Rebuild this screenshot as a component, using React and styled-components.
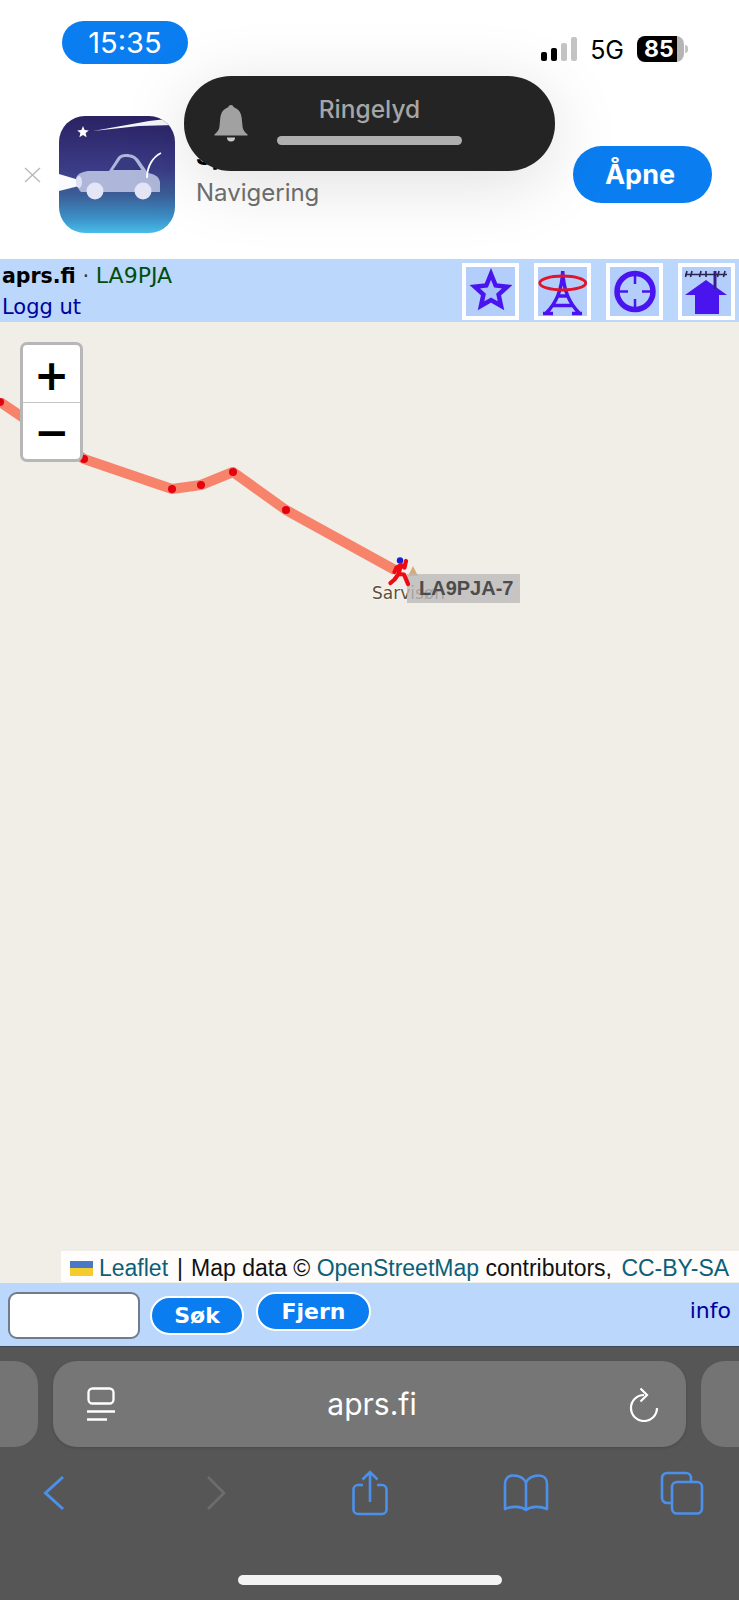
import React from "react";
import styled, { createGlobalStyle } from "styled-components";

const GlobalStyle = createGlobalStyle`
  html, body {
    margin: 0;
    padding: 0;
    background: #fff;
  }
  * {
    box-sizing: border-box;
  }
`;

const BLUE = "#0a7df0";
const TILE_INK = "#4a14ee";
const TOOL_BLUE = "#4b90ea";

const routePoints = [
  [0, 80],
  [84, 137],
  [172, 167],
  [201, 163],
  [233, 150],
  [286, 188],
  [395, 248],
];
const routeDots = routePoints.slice(0, 6);

const signalBars = [
  { height: 9, on: true },
  { height: 13, on: true },
  { height: 18, on: false },
  { height: 24, on: false },
];

export default function App() {
  return (
    <>
      <GlobalStyle />
      <Page>
        <TopArea>
          <StatusBar>
            <TimePill>15:35</TimePill>
            <StatusRight>
              <Signal>
                {signalBars.map((bar, index) => (
                  <SignalBar key={index} $height={bar.height} $on={bar.on} />
                ))}
              </Signal>
              <NetworkLabel>5G</NetworkLabel>
              <Battery>85</Battery>
            </StatusRight>
          </StatusBar>

          <Banner>
            <CloseMark viewBox="0 0 17 16">
              <path d="M1 1l15 14M16 1L1 15" stroke="#b9b9b9" strokeWidth="1.4" fill="none" />
            </CloseMark>
            <AppIcon>
              <AppArtwork />
            </AppIcon>
            <BannerText>
              <AppTitle>Sp</AppTitle>
              <AppCategory>Navigering</AppCategory>
            </BannerText>
            <OpenButton>Åpne</OpenButton>
          </Banner>

          <RingerHud>
            <BellIcon viewBox="0 0 34 39">
              <path
                d="M17 1c-1.600 0-2.600 1-2.700 2.300C9.300 5 6.800 9 6.300 14L5.500 22C5 27 2.500 28.500.5 30.300V31.500h33v-1.200C31.500 28.500 29 27 28.500 22L27.700 14C27.200 9 24.700 5 19.700 3.300 19.600 2 18.600 1 17 1z"
                fill="#a1a1a1"
              />
              <path d="M13 33.500h8a4 4 0 0 1-8 0z" fill="#c9c9c9" />
            </BellIcon>
            <HudBody>
              <HudLabel>Ringelyd</HudLabel>
              <HudBar />
            </HudBody>
          </RingerHud>
        </TopArea>

        <SiteHeader>
          <SiteInfo>
            <SiteLine>
              <SiteName>aprs.fi</SiteName>
              <SiteDot> · </SiteDot>
              <SiteUser>LA9PJA</SiteUser>
            </SiteLine>
            <LogoutLink>Logg ut</LogoutLink>
          </SiteInfo>
          <TileRow>
            <Tile>
              <TileIcon viewBox="0 0 49 49">
                <path
                  d="M25 7l4.700 11.500 11.500 1.250-8.600 7.750L35 38.750 25 33l-10 5.750 2.400-11.250-8.600-7.750 11.500-1.250z"
                  fill="#a9c1fb"
                  stroke={TILE_INK}
                  strokeWidth="4.500"
                />
              </TileIcon>
            </Tile>
            <Tile>
              <TileIcon viewBox="0 0 49 49">
                <path
                  d="M24.700 4c-.5 16-6 32-17 42.500M24.700 4c.5 16 6 32 17 42.500M5 46.500h10M34 46.500h10M18.500 29h12.500M14 38.500h21"
                  fill="none"
                  stroke={TILE_INK}
                  strokeWidth="3.500"
                />
                <ellipse cx="24.700" cy="16" rx="23" ry="7" fill="none" stroke="#e0142a" strokeWidth="2.800" />
              </TileIcon>
            </Tile>
            <Tile>
              <TileIcon viewBox="0 0 49 49">
                <circle cx="25" cy="24.500" r="18" fill="none" stroke={TILE_INK} strokeWidth="5.500" />
                <path d="M25 8v9M25 32v9M9 24.500h9M32 24.500h9" stroke={TILE_INK} strokeWidth="2.500" />
              </TileIcon>
            </Tile>
            <Tile>
              <TileIcon viewBox="0 0 49 49">
                <path d="M3 28L24 13l21 15h-8v19H13V28z" fill={TILE_INK} />
                <path d="M33 4v18" stroke="#3a1a9a" strokeWidth="3" />
                <path
                  d="M3 7.500h42M5 4l-1.500 6M10 4L8.500 10M19 4l-1.500 6M24 4v6M37 4l-1.500 6M43 4l-1.500 6"
                  stroke="#2b2350"
                  strokeWidth="1.600"
                  fill="none"
                />
              </TileIcon>
            </Tile>
          </TileRow>
        </SiteHeader>

        <MapArea>
          <RouteLayer viewBox="0 0 739 961">
            <polyline
              points={routePoints.map((p) => p.join(",")).join(" ")}
              fill="none"
              stroke="#f6836a"
              strokeWidth="10"
              strokeLinejoin="round"
            />
            {routeDots.map(([x, y]) => (
              <circle key={x} cx={x} cy={y} r="4" fill="#e3000f" />
            ))}
            <path d="M413 244l5 10h-10z" fill="#d8aa78" />
          </RouteLayer>
          <PlaceLabel>Sarvisøn</PlaceLabel>
          <TrackLabel>LA9PJA-7</TrackLabel>
          <Runner viewBox="0 0 24 30">
            <circle cx="12" cy="3.500" r="3.200" fill="#1420d8" />
            <path
              d="M13 8L10.500 17M13 8l3.500 2.500L18 4M13 8L8.500 10.500 6.500 15M10.500 17L6.500 22.500 2.500 26M10.500 17l5.500.5 4 9.500"
              fill="none"
              stroke="#ee0a12"
              strokeWidth="4.200"
              strokeLinecap="round"
              strokeLinejoin="round"
            />
          </Runner>

          <ZoomControl>
            <ZoomButton>+</ZoomButton>
            <ZoomButton $last>−</ZoomButton>
          </ZoomControl>

          <Attribution>
            <FlagIcon />
            <AttrLink>Leaflet</AttrLink>
            <AttrSeparator>|</AttrSeparator>
            Map data © <AttrLink>OpenStreetMap</AttrLink> contributors, <LicenceLink>CC-BY-SA</LicenceLink>
          </Attribution>
        </MapArea>

        <SearchBar>
          <SearchInput />
          <PillButton $width={94} $offset={4}>Søk</PillButton>
          <PillButton $width={115} $offset={0}>Fjern</PillButton>
          <InfoLink>info</InfoLink>
        </SearchBar>

        <BrowserChrome>
          <AddressRow>
            <PeekPill $side="left" />
            <AddressPill>
              <svg width="28" height="34" viewBox="0 0 28 34">
                <rect x="1.500" y="1.500" width="25" height="15" rx="4" fill="none" stroke="#fff" strokeWidth="2.300" />
                <path d="M0 24.500h28M0 32.500h20" stroke="#fff" strokeWidth="2.500" />
              </svg>
              <AddressText>aprs.fi</AddressText>
              <svg width="30" height="35" viewBox="0 0 30 35">
                <path
                  d="M15 8A13 13 0 1 0 28 21M11.500 1.500L18 8l-6.500 6.500"
                  fill="none"
                  stroke="#fff"
                  strokeWidth="2.200"
                />
              </svg>
            </AddressPill>
            <PeekPill $side="right" />
          </AddressRow>

          <NavRow>
            <svg width="22" height="36" viewBox="0 0 22 36">
              <path d="M20 2L2.500 18 20 34" fill="none" stroke={TOOL_BLUE} strokeWidth="3" />
            </svg>
            <svg width="20" height="36" viewBox="0 0 20 36">
              <path d="M2 2l16 16L2 34" fill="none" stroke="#6d6d6d" strokeWidth="2.600" />
            </svg>
            <svg width="36" height="46" viewBox="0 0 36 46">
              <path
                d="M11 15H6a4.500 4.500 0 0 0-4.500 4.500v20A4.500 4.500 0 0 0 6 44h24a4.500 4.500 0 0 0 4.500-4.500v-20A4.500 4.500 0 0 0 30 15h-5M18 32V2M10.500 9.500L18 2l7.500 7.500"
                fill="none"
                stroke={TOOL_BLUE}
                strokeWidth="2.600"
              />
            </svg>
            <svg width="46" height="38" viewBox="0 0 46 38">
              <path
                d="M23 36c-5-4-14-4-21-1V10C2 5 5 1.500 10 1.500c6 0 11 2.500 13 7.500 2-5 7-7.500 13-7.500 5 0 8 3.500 8 8.500v25c-7-3-16-3-21 1zM23 9v27"
                fill="none"
                stroke={TOOL_BLUE}
                strokeWidth="2.600"
                strokeLinejoin="round"
              />
            </svg>
            <svg width="44" height="44" viewBox="0 0 44 44">
              <path
                d="M11 32H7a5 5 0 0 1-5-5V7a5 5 0 0 1 5-5h19a5 5 0 0 1 5 5v3"
                fill="none"
                stroke={TOOL_BLUE}
                strokeWidth="2.600"
              />
              <rect x="12" y="11" width="30" height="31.500" rx="5" fill="none" stroke={TOOL_BLUE} strokeWidth="2.600" />
            </svg>
          </NavRow>

          <HomeIndicator />
        </BrowserChrome>
      </Page>
    </>
  );
}

// Night-drive app icon: comet over a car with its headlight on
function AppArtwork() {
  return (
    <svg width="116" height="117" viewBox="0 0 116 117">
      <defs>
        <linearGradient id="skyFade" x1="0" y1="0" x2="0" y2="1">
          <stop offset="0" stopColor="#2a2263" />
          <stop offset="0.45" stopColor="#3b3b86" />
          <stop offset="0.68" stopColor="#3b5f98" />
          <stop offset="0.88" stopColor="#3c92c9" />
          <stop offset="1" stopColor="#49bdea" />
        </linearGradient>
      </defs>
      <rect width="116" height="117" fill="url(#skyFade)" />
      <path d="M34 15L90 5l26-3v7L80 10z" fill="#f4f4fb" />
      <path d="M24 10l1.600 4 4.200.4-3.200 2.600 1 4.200-3.600-2.300-3.600 2.300 1-4.200-3.200-2.600 4.200-.4z" fill="#fff" />
      <path d="M0 58l20 6v6L0 75z" fill="#fbfbff" />
      <path
        d="M17 62c2-5 8-7 14-7h19l9-14c2-2 4-3 8-3 6 0 10 2 13 6l9 13c6 1 11 3 12 9v10H22c-3-3-5-8-5-14z"
        fill="#aeb6da"
      />
      <path d="M54 54l7.500-11c1-1.500 3-2 6-2 4 0 7 1 9 4l6 9z" fill="#373a80" />
      <ellipse cx="20" cy="66" rx="3" ry="6" fill="#dfe2f4" />
      <circle cx="36" cy="75" r="8.500" fill="#e4e6f6" />
      <circle cx="84" cy="75" r="8.500" fill="#e4e6f6" />
      <path d="M88 62c0-12 6-21 14-25" fill="none" stroke="#fff" strokeWidth="1.800" />
    </svg>
  );
}

const Page = styled.div`
  width: 739px;
  height: 1600px;
  display: flex;
  flex-direction: column;
  overflow: hidden;
  font-family: "Inter", "Liberation Sans", sans-serif;
`;

const TopArea = styled.div`
  position: relative;
  height: 259px;
  flex: none;
  background: #fff;
`;

const StatusBar = styled.div`
  display: flex;
  justify-content: space-between;
  align-items: flex-start;
  height: 116px;
  padding: 21px 55px 0 62px;
`;

const TimePill = styled.div`
  width: 126px;
  height: 43px;
  border-radius: 22px;
  background: ${BLUE};
  color: #fff;
  font-size: 29px;
  line-height: 43px;
  text-align: center;
`;

const StatusRight = styled.div`
  display: flex;
  align-items: center;
  margin-top: 15px;
  height: 26px;
`;

const Signal = styled.div`
  display: flex;
  align-items: flex-end;
  gap: 4px;
  height: 24px;
`;

const SignalBar = styled.div`
  width: 6px;
  height: ${(p) => p.$height}px;
  border-radius: 2px;
  background: ${(p) => (p.$on ? "#000" : "#c4c4c4")};
`;

const NetworkLabel = styled.div`
  margin: 2px 13px 0 13px;
  font-size: 25px;
  color: #000;
`;

const Battery = styled.div`
  position: relative;
  width: 47px;
  height: 26px;
  padding-left: 7px;
  border-radius: 8px;
  background: linear-gradient(90deg, #000 85%, #b5b5b5 85%);
  color: #fff;
  font-size: 23px;
  font-weight: 700;
  line-height: 26px;

  &::after {
    content: "";
    position: absolute;
    top: 9px;
    right: -4px;
    width: 3px;
    height: 8px;
    border-radius: 0 3px 3px 0;
    background: #c4c4c4;
  }
`;

const Banner = styled.div`
  display: flex;
  align-items: center;
  height: 117px;
  padding: 0 27px 0 24px;
`;

const CloseMark = styled.svg`
  width: 17px;
  height: 16px;
  margin-right: 18px;
  flex: none;
`;

const AppIcon = styled.div`
  width: 116px;
  height: 117px;
  flex: none;
  border-radius: 26px;
  overflow: hidden;

  svg {
    display: block;
  }
`;

const BannerText = styled.div`
  flex: 1;
  padding-left: 21px;
`;

const AppTitle = styled.div`
  font-size: 24px;
  font-weight: 700;
  line-height: 30px;
  color: #000;
`;

const AppCategory = styled.div`
  margin-top: 6px;
  font-size: 24px;
  line-height: 30px;
  color: #707070;
`;

const OpenButton = styled.button`
  width: 139px;
  height: 57px;
  flex: none;
  padding: 0 5px 0 0;
  border: none;
  border-radius: 29px;
  background: ${BLUE};
  color: #fff;
  font-family: inherit;
  font-size: 27px;
  font-weight: 700;
`;

const RingerHud = styled.div`
  position: absolute;
  top: 76px;
  left: 184px;
  width: 371px;
  height: 95px;
  display: flex;
  align-items: center;
  padding-left: 30px;
  border-radius: 47px;
  background: #242424;
  box-shadow: 0 12px 70px rgba(0, 0, 0, 0.13);
`;

const BellIcon = styled.svg`
  width: 34px;
  height: 39px;
  flex: none;
`;

const HudBody = styled.div`
  display: flex;
  flex-direction: column;
  align-items: center;
  margin-left: 29px;
  margin-bottom: 8px;
  width: 185px;
`;

const HudLabel = styled.div`
  font-size: 24.500px;
  font-weight: 500;
  line-height: 30px;
  color: #a6a6a6;
`;

const HudBar = styled.div`
  width: 100%;
  height: 9px;
  margin-top: 12px;
  border-radius: 5px;
  background: #afafaf;
`;

const SiteHeader = styled.header`
  height: 63px;
  flex: none;
  display: flex;
  justify-content: space-between;
  align-items: center;
  padding: 2px 4px 0 2px;
  background: #bbd7fb;
  font-family: "DejaVu Sans", sans-serif;
`;

const SiteInfo = styled.div`
  display: flex;
  flex-direction: column;
  gap: 3px;
`;

const SiteLine = styled.div`
  font-size: 21px;
  line-height: 28px;
  white-space: pre;
`;

const SiteName = styled.span`
  font-size: 20.500px;
  font-weight: 700;
  color: #000;
`;

const SiteDot = styled.span`
  color: #333;
`;

const SiteUser = styled.span`
  font-size: 22px;
  color: #004d10;
`;

const LogoutLink = styled.a`
  font-size: 21px;
  line-height: 28px;
  color: #00009e;
`;

const TileRow = styled.div`
  display: flex;
  gap: 15px;
`;

const Tile = styled.div`
  width: 57px;
  height: 57px;
  border: 4px solid #fff;
  background: #b3cefb;
`;

const TileIcon = styled.svg`
  display: block;
  width: 49px;
  height: 49px;
`;

const MapArea = styled.div`
  position: relative;
  flex: 1;
  overflow: hidden;
  background: #f1ede7;
`;

const RouteLayer = styled.svg`
  position: absolute;
  top: 0;
  left: 0;
  width: 739px;
  height: 961px;
`;

const Runner = styled.svg`
  position: absolute;
  left: 388px;
  top: 235px;
  width: 24px;
  height: 30px;
`;

const PlaceLabel = styled.div`
  position: absolute;
  left: 372px;
  top: 260px;
  font-family: "DejaVu Sans", sans-serif;
  font-size: 17px;
  line-height: 22px;
  color: #5e4f38;
  text-shadow: 0 0 2px #fff, 0 0 2px #fff;
`;

const TrackLabel = styled.div`
  position: absolute;
  left: 407px;
  top: 252px;
  width: 113px;
  height: 29px;
  padding-left: 12px;
  background: rgba(186, 186, 184, 0.78);
  font-family: "Liberation Sans", sans-serif;
  font-size: 20px;
  font-weight: 700;
  line-height: 29px;
  color: #4c4c4c;
`;

const ZoomControl = styled.div`
  position: absolute;
  left: 20px;
  top: 20px;
  width: 63px;
  height: 120px;
  border: 3px solid #b7b7b7;
  border-radius: 7px;
  background: #fff;
  display: flex;
  flex-direction: column;
`;

const ZoomButton = styled.div`
  flex: 1;
  display: flex;
  align-items: center;
  justify-content: center;
  padding-top: 4px;
  border-bottom: ${(p) => (p.$last ? "none" : "1.500px solid #c4c4c4")};
  font-family: "DejaVu Sans", sans-serif;
  font-size: 42px;
  font-weight: 700;
  color: #000;
`;

const Attribution = styled.div`
  position: absolute;
  right: 0;
  bottom: 1px;
  width: 678px;
  height: 31px;
  display: flex;
  align-items: center;
  padding: 3px 0 0 9px;
  background: rgba(255, 255, 255, 0.88);
  font-family: "Liberation Sans", sans-serif;
  font-size: 23px;
  color: #111;
  white-space: pre;
`;

const FlagIcon = styled.span`
  width: 23px;
  height: 15px;
  margin-right: 6px;
  background: linear-gradient(180deg, #4a78c9 50%, #f5cc2e 50%);
`;

const AttrLink = styled.span`
  color: #0b6078;
`;

const LicenceLink = styled(AttrLink)`
  margin-left: 3px;
`;

const AttrSeparator = styled.span`
  margin: 0 8px 0 9px;
`;

const SearchBar = styled.div`
  height: 63px;
  flex: none;
  display: flex;
  align-items: flex-start;
  padding: 9px 8px 0 8px;
  background: #bbd7fb;
  font-family: "DejaVu Sans", sans-serif;
`;

const SearchInput = styled.div`
  width: 132px;
  height: 47px;
  border: 2px solid #6f7c8c;
  border-radius: 9px;
  background: #fff;
  margin-right: 10px;
`;

const PillButton = styled.button`
  width: ${(p) => p.$width}px;
  height: 39px;
  margin-top: ${(p) => p.$offset}px;
  margin-right: 12px;
  padding: 0;
  border: 2px solid #fff;
  border-radius: 20px;
  background: ${BLUE};
  color: #fff;
  font-family: inherit;
  font-size: 22px;
  font-weight: 700;
`;

const InfoLink = styled.a`
  margin-left: auto;
  margin-top: 6px;
  font-size: 22px;
  line-height: 26px;
  color: #00009e;
`;

const BrowserChrome = styled.div`
  height: 254px;
  flex: none;
  display: flex;
  flex-direction: column;
  padding-top: 14px;
  border-top: 1px solid #3f4752;
  background: #565656;
`;

const AddressRow = styled.div`
  display: grid;
  grid-template-columns: 38px 633px 1fr;
  column-gap: 15px;
  height: 86px;
`;

const PeekPill = styled.div`
  background: #747474;
  border-radius: ${(p) => (p.$side === "left" ? "0 24px 24px 0" : "24px 0 0 24px")};
`;

const AddressPill = styled.div`
  display: flex;
  align-items: center;
  justify-content: space-between;
  padding: 0 27px 0 34px;
  border-radius: 24px;
  background: #767676;
  box-shadow: 0 1px 3px rgba(0, 0, 0, 0.15);
`;

const AddressText = styled.div`
  font-size: 30px;
  color: #fff;
`;

const NavRow = styled.div`
  display: grid;
  grid-template-columns: 108px 216px 92px 220px 92px;
  align-items: center;
  justify-items: center;
  height: 46px;
  margin-top: 23px;
`;

const HomeIndicator = styled.div`
  align-self: center;
  width: 264px;
  height: 10px;
  margin-top: auto;
  margin-bottom: 15px;
  border-radius: 5px;
  background: #f3f3f3;
`;
